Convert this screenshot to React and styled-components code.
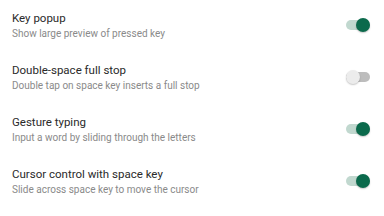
import React, {useState} from 'react';
import styled, {createGlobalStyle} from 'styled-components';

const GlobalStyle = createGlobalStyle`
    html, body {
        margin: 0;
        padding: 0;
        background: #fff;
    }
    body {
        font-family: Roboto, "Noto Sans", "Liberation Sans", sans-serif;
    }
`;

const List = styled.div`
    width: 384px;
    height: 216px;
    overflow: hidden;
    background: #fff;
    display: flex;
    flex-direction: column;
`;

const Row = styled.div`
    height: 52px;
    display: flex;
    align-items: center;
    justify-content: space-between;
    padding: 0 14px 0 12px;
    flex-shrink: 0;
    &:first-child {
        margin-top: -1px;
    }
`;

const TextBlock = styled.div`
    display: flex;
    flex-direction: column;
    gap: 3px;
`;

const Title = styled.div`
    font-size: 11.5px;
    line-height: 14px;
    color: #2a2a2a;
`;

const Summary = styled.div`
    font-size: 10px;
    line-height: 12px;
    color: #8a8a8a;
`;

const Track = styled.button`
    position: relative;
    width: 24px;
    height: 10px;
    padding: 0;
    border: none;
    border-radius: 5px;
    cursor: pointer;
    background-color: ${p => (p.on ? '#c1d8cf' : '#bdbdbd')};
`;

const Thumb = styled.span`
    position: absolute;
    top: -2px;
    left: ${p => (p.on ? '10px' : '0')};
    width: 14px;
    height: 14px;
    border-radius: 50%;
    background-color: ${p => (p.on ? '#0b6a4c' : '#ececec')};
    box-shadow: 0 1px 1.5px rgba(0, 0, 0, 0.22);
`;

const settings = [
    {title: 'Key popup', summary: 'Show large preview of pressed key', on: true},
    {title: 'Double-space full stop', summary: 'Double tap on space key inserts a full stop', on: false},
    {title: 'Gesture typing', summary: 'Input a word by sliding through the letters', on: true},
    {title: 'Cursor control with space key', summary: 'Slide across space key to move the cursor', on: true},
];

const Switch = ({on, toggle}) => (
    <Track on={on ? 1 : 0} onClick={toggle}>
        <Thumb on={on ? 1 : 0} />
    </Track>
);

const App = () => {
    const [values, setValues] = useState(settings.map(s => s.on));

    const toggle = i => setValues(v => v.map((x, j) => (j === i ? !x : x)));

    return (
        <List>
            <GlobalStyle />
            {settings.map((s, i) => (
                <Row key={s.title}>
                    <TextBlock>
                        <Title>{s.title}</Title>
                        <Summary>{s.summary}</Summary>
                    </TextBlock>
                    <Switch on={values[i]} toggle={() => toggle(i)} />
                </Row>
            ))}
        </List>
    );
};

export default App;
